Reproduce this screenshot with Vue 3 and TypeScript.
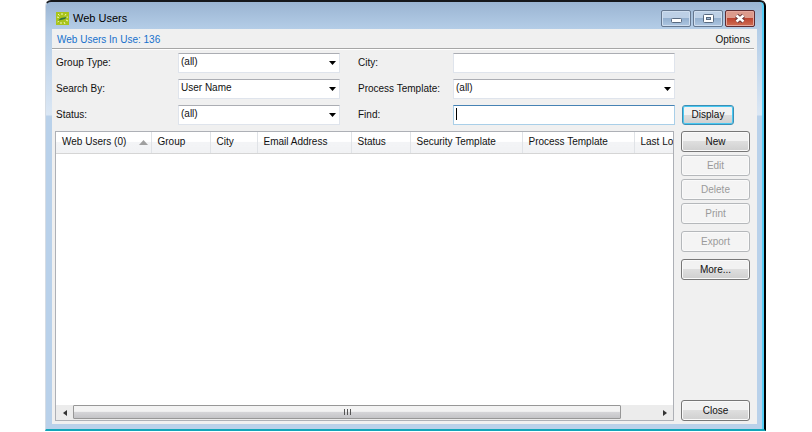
<script setup lang="ts">
import { ref } from 'vue'

interface SideAction {
  label: string
  enabled: boolean
  spaced: boolean
}

const groupType = ref('(all)')
const searchBy = ref('User Name')
const status = ref('(all)')
const city = ref('')
const processTemplate = ref('(all)')
const find = ref('')
const inUse = 136

const columns: string[] = [
  'Web Users (0)',
  'Group',
  'City',
  'Email Address',
  'Status',
  'Security Template',
  'Process Template',
  'Last Lo',
]

const actions: SideAction[] = [
  { label: 'New', enabled: true, spaced: false },
  { label: 'Edit', enabled: false, spaced: false },
  { label: 'Delete', enabled: false, spaced: false },
  { label: 'Print', enabled: false, spaced: false },
  { label: 'Export', enabled: false, spaced: true },
  { label: 'More...', enabled: true, spaced: true },
]
</script>

<template>
  <div class="desktop">
    <section class="window">
      <header class="titlebar">
        <svg class="logo" viewBox="0 0 13 13" aria-hidden="true">
          <rect width="13" height="13" fill="#a9c41c" />
          <path
            d="M2 2l1.500 1.500M6 1v2M10 2l-1 1.500M12 5l-2 .5M12 9l-2-1M9 12l-1-2M5 12v-2M1.500 10l1.500-1M1 5l2 .5"
            stroke="#f0f6b4"
            fill="none"
          />
          <path d="M2 8.500l3-2.500 6-1-2 2-4 1z" fill="#2f7440" />
        </svg>
        <h1>Web Users</h1>
        <div class="caption-buttons">
          <button class="caption" type="button" aria-label="Minimize">
            <svg viewBox="0 0 28 15"><rect x="9.500" y="7.500" width="10" height="4" rx="1" fill="#fff" stroke="#58697f" /></svg>
          </button>
          <button class="caption" type="button" aria-label="Maximize">
            <svg viewBox="0 0 28 15">
              <rect x="9.500" y="3.500" width="10" height="8" rx="1" fill="#fff" stroke="#58697f" />
              <rect x="12.500" y="6.500" width="4" height="2" fill="#9fb8d4" stroke="#58697f" />
            </svg>
          </button>
          <button class="caption close" type="button" aria-label="Close window">
            <svg viewBox="0 0 28 15">
              <path d="M10.500 4.500l7 6M17.500 4.500l-7 6" stroke="#6d3a3c" stroke-width="4.500" />
              <path d="M10.500 4.500l7 6M17.500 4.500l-7 6" stroke="#fff" stroke-width="2.500" />
            </svg>
          </button>
        </div>
      </header>

      <main class="content">
        <div class="menubar">
          <a class="in-use" href="#">Web Users In Use: {{ inUse }}</a>
          <button class="options" type="button">Options</button>
        </div>

        <form class="filters" @submit.prevent>
          <label for="group-type">Group Type:</label>
          <div class="combo">
            <select id="group-type" v-model="groupType"><option>(all)</option></select>
            <svg viewBox="0 0 7 4" aria-hidden="true"><path d="M0 0h7L3.500 4z" /></svg>
          </div>
          <label class="second" for="city">City:</label>
          <input id="city" v-model="city" type="text" />

          <label class="start" for="search-by">Search By:</label>
          <div class="combo">
            <select id="search-by" v-model="searchBy"><option>User Name</option></select>
            <svg viewBox="0 0 7 4" aria-hidden="true"><path d="M0 0h7L3.500 4z" /></svg>
          </div>
          <label class="second" for="process-template">Process Template:</label>
          <div class="combo">
            <select id="process-template" v-model="processTemplate"><option>(all)</option></select>
            <svg viewBox="0 0 7 4" aria-hidden="true"><path d="M0 0h7L3.500 4z" /></svg>
          </div>

          <label class="start" for="status">Status:</label>
          <div class="combo">
            <select id="status" v-model="status"><option>(all)</option></select>
            <svg viewBox="0 0 7 4" aria-hidden="true"><path d="M0 0h7L3.500 4z" /></svg>
          </div>
          <label class="second" for="find">Find:</label>
          <div class="find-box">
            <input id="find" v-model="find" class="focused" type="text" />
            <span class="caret"></span>
          </div>
          <button class="push default" type="submit">Display</button>
        </form>

        <div class="body">
          <div class="list">
            <div class="viewport">
              <table>
                <colgroup>
                  <col v-for="(name, i) in columns" :key="name" :class="'col-' + i" />
                </colgroup>
                <thead>
                  <tr>
                    <th v-for="(name, i) in columns" :key="name" scope="col">
                      <div class="heading">
                        <span>{{ name }}</span>
                        <svg v-if="i === 0" viewBox="0 0 9 5" aria-hidden="true"><path d="M4.500 0L9 5H0z" /></svg>
                      </div>
                    </th>
                  </tr>
                </thead>
              </table>
            </div>
            <div class="scrollbar">
              <button type="button" aria-label="Scroll left">
                <svg viewBox="0 0 4 6"><path d="M4 0v6L0 3z" /></svg>
              </button>
              <div class="track">
                <div class="thumb"><i></i><i></i><i></i></div>
              </div>
              <button type="button" aria-label="Scroll right">
                <svg viewBox="0 0 4 6"><path d="M0 0v6l4-3z" /></svg>
              </button>
            </div>
          </div>

          <aside class="side">
            <button
              v-for="action in actions"
              :key="action.label"
              class="push"
              :class="{ spaced: action.spaced }"
              type="button"
              :disabled="!action.enabled"
            >
              {{ action.label }}
            </button>
            <button class="push last" type="button">Close</button>
          </aside>
        </div>
      </main>
    </section>
  </div>
</template>

<style>
body {
  background: #fff;
}
</style>

<style scoped>
* {
  box-sizing: border-box;
}

.desktop {
  display: flex;
  min-height: 100vh;
  padding: 0 46px 1px 45px;
  font: 10px/16px "Liberation Sans", Arial, sans-serif;
  color: #111;
}

button,
input,
select {
  font: inherit;
  color: inherit;
  margin: 0;
}

.window {
  flex: 1;
  min-width: 0;
  display: flex;
  flex-direction: column;
  padding: 0 7px 5px 6px;
  border-top: 2px solid #15171b;
  border-left: 1px solid #d5dce4;
  border-right: 2px solid #000;
  border-bottom: 2px solid #12a5b9;
  border-radius: 6px 6px 0 0;
  box-shadow: inset -2px 0 #55cdf5;
  background: linear-gradient(#9ab4d2, #b4cde7 27px, #dbe7f4 113px, #b9d1ea 114px);
}

.titlebar {
  display: flex;
  align-items: center;
  height: 27px;
  padding: 5px 2px 0 4px;
}

.logo {
  width: 13px;
  height: 13px;
}

h1 {
  flex: 1;
  margin: 0 0 0 4px;
  font-size: 11px;
  font-weight: 400;
  color: #000;
}

.caption-buttons {
  display: flex;
  gap: 2px;
}

.caption {
  width: 30px;
  height: 17px;
  padding: 0;
  border: 1px solid #65778f;
  border-radius: 2px;
  box-shadow: inset 0 0 0 1px #cfdeef;
  background: linear-gradient(#bdd0e6 48%, #94b0cf 50%, #aec6e1);
}

.caption.close {
  border-color: #5e2c32;
  box-shadow: inset 0 0 0 1px #e5a89e;
  background: linear-gradient(#dc9a8c 48%, #bd4431 50%, #cf6f55);
}

.caption svg {
  display: block;
  width: 28px;
  height: 15px;
}

.content {
  flex: 1;
  display: flex;
  flex-direction: column;
  padding-bottom: 3px;
  background: #f0f0f0;
}

.menubar {
  display: flex;
  justify-content: space-between;
  align-items: center;
  height: 20px;
  margin-right: 3px;
  padding: 2px 4px 0 5px;
  border-bottom: 1px solid #a6a6a6;
  box-shadow: 0 1px #fff;
}

.in-use {
  color: #1670cc;
  text-decoration: none;
}

.options {
  padding: 0;
  border: 0;
  background: none;
}

.filters {
  display: grid;
  grid-template-columns: 122px minmax(0, 162fr) 113px minmax(0, 222fr) 59px;
  grid-auto-rows: 20px;
  row-gap: 6px;
  padding: 4px 23px 6px 4px;
}

.filters > label {
  line-height: 20px;
  white-space: nowrap;
}

.filters .start {
  grid-column: 1;
}

.filters .second {
  padding-left: 18px;
}

.combo,
.find-box {
  position: relative;
}

.filters input,
.combo select {
  display: block;
  width: 100%;
  height: 20px;
  padding: 0 2px 2px;
  appearance: none;
  border: 1px solid #dfe4ec;
  border-top-color: #abadb3;
  border-radius: 0;
  outline: 0;
  background: #fff;
}

.filters input.focused {
  border-color: #a9cfe8;
  border-top-color: #4682b4;
}

.combo svg {
  position: absolute;
  top: 8px;
  right: 4px;
  width: 7px;
  height: 4px;
  pointer-events: none;
}

.caret {
  position: absolute;
  top: 3px;
  left: 3px;
  width: 1px;
  height: 12px;
  background: #000;
}

.push {
  width: 100%;
  height: 21px;
  padding: 0;
  border: 1px solid #777;
  border-radius: 3px;
  box-shadow: inset 0 0 0 1px #fafafa;
  background: linear-gradient(#f2f2f2 48%, #dedede 50%, #cfcfcf);
}

.push:disabled {
  border-color: #b5b8bb;
  background: #f4f4f4;
  color: #9a9a9a;
}

.push.default {
  justify-self: end;
  width: 52px;
  height: 20px;
  border-color: #3c8fb5;
  box-shadow: inset 0 0 0 1px #48c8f2;
}

.body {
  flex: 1;
  display: flex;
  gap: 7px;
  padding: 0 7px 0 3px;
}

.list {
  flex: 1;
  min-width: 0;
  display: flex;
  flex-direction: column;
  border: 1px solid #adb0b6;
  background: #fff;
}

.viewport {
  flex: 1;
  overflow: hidden;
}

table {
  table-layout: fixed;
  width: 100%;
  border-collapse: collapse;
}

.col-0 { width: 95px; }
.col-1 { width: 59px; }
.col-2 { width: 47px; }
.col-3 { width: 94px; }
.col-4 { width: 59px; }
.col-5 { width: 112px; }
.col-6 { width: 112px; }

th {
  height: 21px;
  padding: 0 3px 0 6px;
  border-right: 1px solid #e0e3e7;
  border-bottom: 1px solid #d5d5d5;
  background: linear-gradient(#fff 45%, #f3f4f6 50%, #f1f2f4);
  font-weight: 400;
  text-align: left;
  white-space: nowrap;
}

th:last-child {
  padding-right: 0;
  border-right: 0;
}

.heading {
  display: flex;
  justify-content: space-between;
  align-items: center;
}

.heading svg {
  width: 9px;
  height: 5px;
  fill: #a0a0a0;
}

.scrollbar {
  display: flex;
  height: 15px;
  background: #ececec;
}

.scrollbar button {
  display: grid;
  place-items: center;
  width: 17px;
  padding: 0;
  border: 0;
  background: none;
}

.scrollbar svg {
  width: 4px;
  height: 6px;
  fill: #333;
}

.track {
  flex: 1;
  display: flex;
}

.thumb {
  flex: 0 0 94%;
  display: flex;
  justify-content: center;
  align-items: center;
  gap: 2px;
  height: 14px;
  border: 1px solid #979797;
  border-radius: 1px;
  background: linear-gradient(#f3f3f3 45%, #d5d5d8 50%, #c4c4c7);
}

.thumb i {
  width: 1px;
  height: 6px;
  background: #555;
}

.side {
  width: 69px;
  display: flex;
  flex-direction: column;
  gap: 3px;
}

.side .spaced {
  margin-top: 4px;
}

.side .last {
  margin-top: auto;
}
</style>
